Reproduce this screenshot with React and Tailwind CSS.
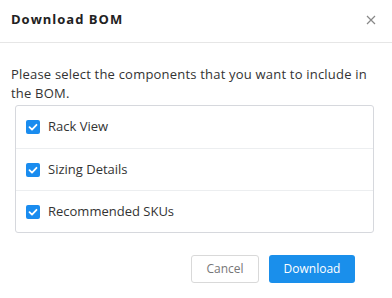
import React, { useState } from 'react';

const items = ['Rack View', 'Sizing Details', 'Recommended SKUs'];

function CheckIcon() {
  return (
    <svg viewBox="0 0 14 14" className="w-[14px] h-[14px]">
      <rect x="0" y="0" width="14" height="14" rx="2" fill="#1a8cef" />
      <path d="M3.5 7.2 L6 9.6 L10.5 4.8" fill="none" stroke="#fff" strokeWidth="1.8" strokeLinecap="round" strokeLinejoin="round" />
    </svg>
  );
}

export default function App() {
  const [checked, setChecked] = useState([true, true, true]);

  return (
    <div className="w-[392px] h-[298px] bg-white text-[#333] font-['Open_Sans',sans-serif]">
      {/* Header */}
      <div className="h-[43px] flex items-center justify-between pl-[11px] pr-[16px] pb-[3px] border-b border-[#e6e6e6]">
        <h2 className="text-[13px] font-bold text-[#222] tracking-[1px]">Download BOM</h2>
        <svg viewBox="0 0 10 10" className="w-[10px] h-[10px]">
          <path d="M1 1 L9 9 M9 1 L1 9" stroke="#888" strokeWidth="1.2" />
        </svg>
      </div>

      {/* Body */}
      <div className="pt-[22px] px-[11px]">
        <p className="text-[13px] leading-[19px] text-[#333] tracking-[0.2px] w-[360px]">
          Please select the components that you want to include in the BOM.
        </p>
        <div className="mt-[2px] ml-[4px] mr-[7px] border border-[#d6d8dd] rounded-[3px]">
          {items.map((label, i) => (
            <label
              key={label}
              className={`h-[42px] flex items-center gap-[8px] pl-[10px] cursor-pointer ${i > 0 ? 'border-t border-[#eceef0]' : ''}`}
              onClick={() => setChecked(checked.map((c, j) => (j === i ? !c : c)))}
            >
              {checked[i] ? <CheckIcon /> : <span className="w-[14px] h-[14px] border border-[#bbb] rounded-[2px]" />}
              <span className="text-[13px] text-[#333]">{label}</span>
            </label>
          ))}
        </div>

        {/* Footer */}
        <div className="flex justify-end gap-[10px] mt-[22px] pr-[26px]">
          <button className="w-[68px] h-[28px] border border-[#d9d9d9] rounded-[3px] text-[12px] text-[#777] bg-white">
            Cancel
          </button>
          <button className="w-[86px] h-[28px] rounded-[3px] text-[12px] text-white bg-[#1a8feb]">
            Download
          </button>
        </div>
      </div>
    </div>
  );
}
